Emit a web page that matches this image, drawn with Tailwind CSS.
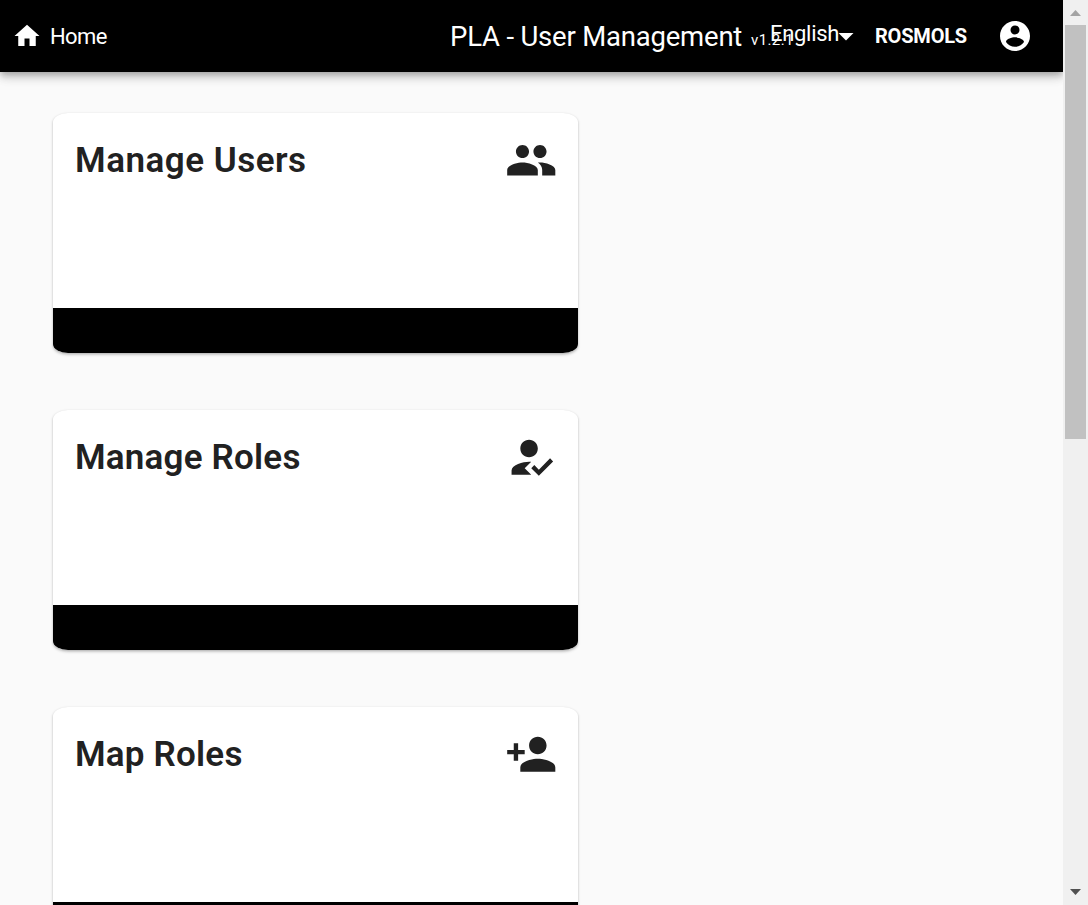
<!DOCTYPE html>
<html lang="en">
<head>
<meta charset="utf-8">
<title>PLA - User Management</title>
<script src="https://cdn.jsdelivr.net/npm/@tailwindcss/browser@4"></script>
</head>
<body class="flex h-screen overflow-hidden bg-[#fafafa] font-['Roboto',sans-serif] text-[#212121]">
<div class="flex h-full w-[1063px] flex-col overflow-hidden">
  <header class="z-10 flex h-[72px] shrink-0 items-center bg-black text-white shadow-[0_3px_6px_-1px_rgba(0,0,0,0.2),0_6px_8px_0_rgba(0,0,0,0.14),0_1px_15px_0_rgba(0,0,0,0.12)]">
    <a class="flex w-[450px] items-center pl-3">
      <svg class="size-[30px]" viewBox="0 0 24 24" fill="currentColor"><path d="M10 20v-6h4v6h5v-8h3L12 3 2 12h3v8z"/></svg>
      <span class="ml-2 pt-[2px] text-[22px] leading-[30px] tracking-[-0.6px]">Home</span>
    </a>
    <h1 class="flex w-[320px] items-center whitespace-nowrap pt-[2px]">
      <span class="w-[301px] shrink-0 text-[27.5px] leading-9 tracking-[-0.2px]">PLA - User Management</span>
      <span class="pt-[5px] text-[15px] leading-5 tracking-[0.4px]">v1.2.1</span>
    </h1>
    <div class="flex w-[105px] items-center">
      <span class="w-[69px] pb-[5px] text-[22px] leading-[30px] tracking-[-0.3px]">English</span>
      <svg class="-ml-[11px] size-9 shrink-0" viewBox="0 0 24 24" fill="currentColor"><path d="M7 10l5 5 5-5z"/></svg>
    </div>
    <span class="w-[122px] text-[20px] font-bold leading-[30px] tracking-[-0.2px]">ROSMOLS</span>
    <svg class="size-9" viewBox="0 0 24 24" fill="currentColor"><path d="M12 2C6.480 2 2 6.480 2 12s4.480 10 10 10 10-4.480 10-10S17.520 2 12 2zm0 3c1.660 0 3 1.340 3 3s-1.340 3-3 3-3-1.340-3-3 1.340-3 3-3zm0 14.200c-2.500 0-4.710-1.280-6-3.220.030-1.990 4-3.080 6-3.080 1.990 0 5.970 1.090 6 3.080-1.290 1.940-3.500 3.220-6 3.220z"/></svg>
  </header>
  <main class="flex flex-col gap-[57px] pl-[53px] pt-[41px]">
    <section class="flex h-60 w-[525px] shrink-0 flex-col overflow-hidden rounded-[15px/9px] bg-white shadow-[0_1.5px_3px_rgba(0,0,0,0.18),0_1px_2px_rgba(0,0,0,0.12)]">
      <div class="flex flex-1 items-start justify-between pl-[22px] pr-[20.5px] pt-[21px]">
        <h2 class="pt-px text-[35px] font-semibold leading-[52px] tracking-[0.5px]">Manage Users</h2>
        <svg class="size-[52.5px]" viewBox="0 0 24 24" fill="currentColor"><path d="M16 11c1.660 0 2.990-1.340 2.990-3S17.660 5 16 5s-3 1.340-3 3 1.340 3 3 3zm-8 0c1.660 0 2.990-1.340 2.990-3S9.660 5 8 5 5 6.340 5 8s1.340 3 3 3zm0 2c-2.330 0-7 1.170-7 3.500V19h14v-2.500c0-2.330-4.670-3.500-7-3.500zm8 0c-.290 0-.620.020-.970.050 1.160.840 1.970 1.970 1.970 3.450V19h6v-2.500c0-2.330-4.670-3.500-7-3.500z"/></svg>
      </div>
      <div class="h-[45px] bg-black"></div>
    </section>
    <section class="flex h-60 w-[525px] shrink-0 flex-col overflow-hidden rounded-[15px/9px] bg-white shadow-[0_1.5px_3px_rgba(0,0,0,0.18),0_1px_2px_rgba(0,0,0,0.12)]">
      <div class="flex flex-1 items-start justify-between pl-[22px] pr-[20.5px] pt-[21px]">
        <h2 class="pt-px text-[35px] font-semibold leading-[52px] tracking-[0.2px]">Manage Roles</h2>
        <svg class="size-[52.5px]" viewBox="0 0 24 24" fill="currentColor"><path d="M9 17l3-2.940c-.390-.040-.680-.060-1-.060-2.670 0-8 1.340-8 4v2h9l-3-3zm2-5c2.210 0 4-1.790 4-4s-1.790-4-4-4-4 1.790-4 4 1.790 4 4 4"/><path d="M15.470 20.500L12 17l1.400-1.410 2.070 2.080 5.130-5.170 1.400 1.410z"/></svg>
      </div>
      <div class="h-[45px] bg-black"></div>
    </section>
    <section class="flex h-60 w-[525px] shrink-0 flex-col overflow-hidden rounded-[15px/9px] bg-white shadow-[0_1.5px_3px_rgba(0,0,0,0.18),0_1px_2px_rgba(0,0,0,0.12)]">
      <div class="flex flex-1 items-start justify-between pl-[22px] pr-[20.5px] pt-[21px]">
        <h2 class="pt-px text-[35px] font-semibold leading-[52px] tracking-[0.2px]">Map Roles</h2>
        <svg class="size-[52.5px]" viewBox="0 0 24 24" fill="currentColor"><path d="M15 12c2.210 0 4-1.790 4-4s-1.790-4-4-4-4 1.790-4 4 1.790 4 4 4zm-9-2V7H4v3H1v2h3v3h2v-3h3v-2H6zm9 4c-2.670 0-8 1.340-8 4v2h16v-2c0-2.660-5.330-4-8-4z"/></svg>
      </div>
      <div class="h-[45px] bg-black"></div>
    </section>
  </main>
</div>
<aside class="flex h-full w-[25px] flex-col items-center bg-[#f0f0f0]">
  <svg class="h-[25px] w-[25px] shrink-0" viewBox="0 0 25 25"><path d="M7 16h11l-5.500-6z" fill="#a3a3a3"/></svg>
  <div class="h-[414px] w-[21px] bg-[#c1c1c1]"></div>
  <svg class="mt-auto h-[25px] w-[25px] shrink-0" viewBox="0 0 25 25"><path d="M7 9h11l-5.500 6z" fill="#505050"/></svg>
</aside>
</body>
</html>
